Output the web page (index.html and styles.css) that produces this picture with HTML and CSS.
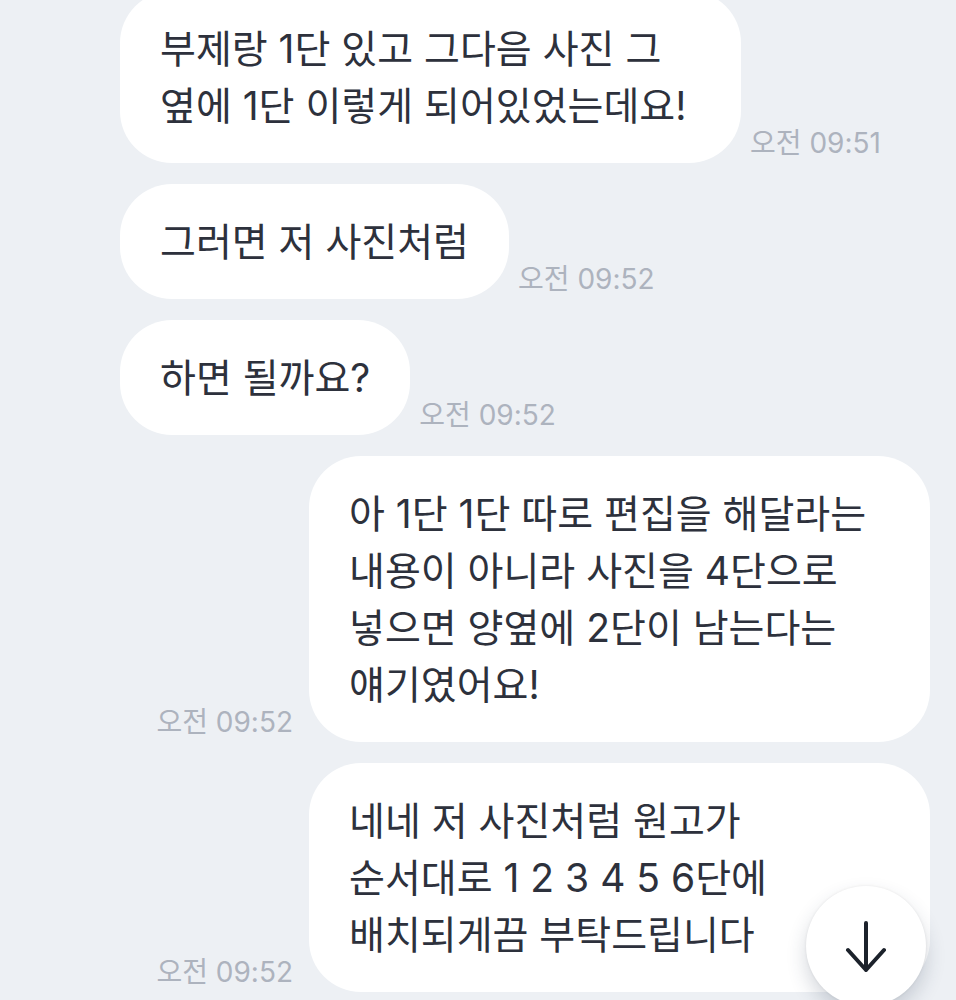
FILE: index.html
```
<!DOCTYPE html>
<html lang="ko">
<head>
  <meta charset="UTF-8">
  <meta name="viewport" content="width=device-width, initial-scale=1">
  <title>채팅</title>
  <link rel="stylesheet" href="styles.css">
</head>
<body>
  <main class="chat">
    <div class="message">
      <p class="bubble">부제랑 1단 있고 그다음 사진 그 옆에 1단 이렇게 되어있었는데요!</p>
      <time class="time">오전 09:51</time>
    </div>
    <div class="message">
      <p class="bubble">그러면 저 사진처럼</p>
      <time class="time">오전 09:52</time>
    </div>
    <div class="message">
      <p class="bubble">하면 될까요?</p>
      <time class="time">오전 09:52</time>
    </div>
    <div class="message mine">
      <p class="bubble">아 1단 1단 따로 편집을 해달라는 내용이 아니라 사진을 4단으로 넣으면 양옆에 2단이 남는다는 얘기였어요!</p>
      <time class="time">오전 09:52</time>
    </div>
    <div class="message mine">
      <p class="bubble">네네 저 사진처럼 원고가 순서대로 1 2 3 4 5 6단에 배치되게끔 부탁드립니다</p>
      <time class="time">오전 09:52</time>
    </div>
  </main>

  <button class="scroll-down" type="button" aria-label="맨 아래로">
    <svg width="42" height="52" viewBox="0 0 42 52" fill="none" stroke="#1c222b" stroke-width="4" stroke-linecap="round" stroke-linejoin="round">
      <path d="M21 3v47M3 30l18 20 18-20"/>
    </svg>
  </button>
</body>
</html>
```

FILE: styles.css
```
* {
  box-sizing: border-box;
}

body {
  margin: 0;
  background: #edf0f4;
  color: #2d313c;
  font-family: Inter, "Noto Sans CJK KR", sans-serif;
  overflow: hidden;
}

.chat {
  display: flex;
  flex-direction: column;
  gap: 21px;
  min-height: 100vh;
  margin-top: -9px;
  padding: 0 26px 0 120px;
}

.message {
  display: flex;
  align-items: flex-end;
  gap: 9px;
}

.bubble {
  max-width: 621px;
  margin: 0;
  padding: 29px 40px;
  border-radius: 52px;
  background: #fff;
  font-size: 39px;
  line-height: 57px;
  word-break: keep-all;
}

.time {
  padding-bottom: 2px;
  color: #adb3be;
  font-size: 28px;
  line-height: 36px;
  white-space: nowrap;
}

.mine {
  flex-direction: row-reverse;
  gap: 16px;
}

.scroll-down {
  position: fixed;
  right: 30px;
  bottom: -6px;
  display: flex;
  align-items: center;
  justify-content: center;
  width: 120px;
  height: 120px;
  padding: 0;
  border: 0;
  border-radius: 50%;
  background: #fff;
  box-shadow: 0 0 3px rgba(0, 0, 0, 0.08), 0 10px 20px rgba(40, 55, 80, 0.2);
  cursor: pointer;
}
```
